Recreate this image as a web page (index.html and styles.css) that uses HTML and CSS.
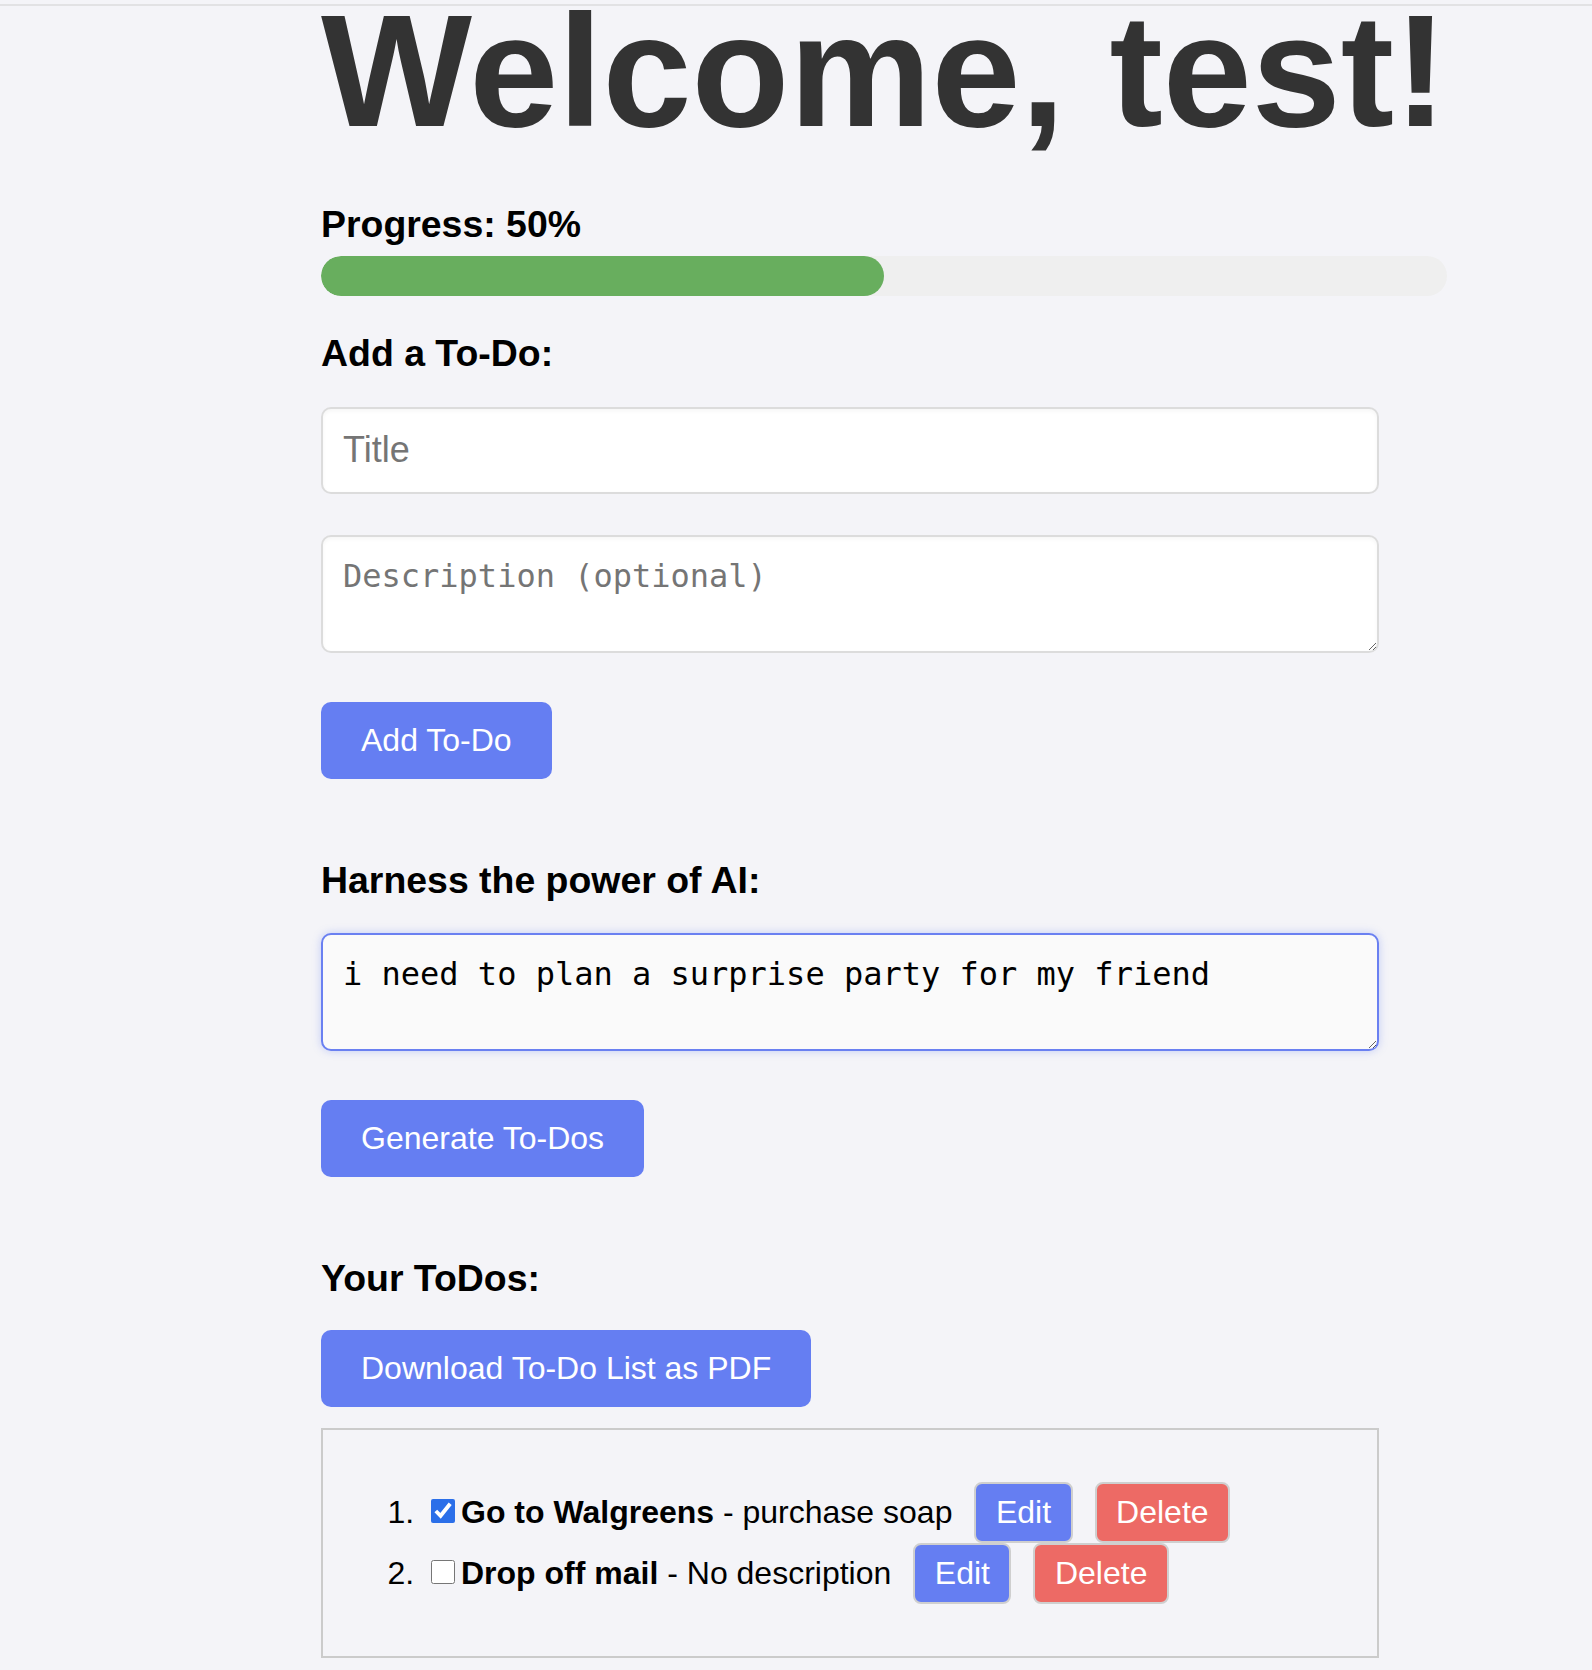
FILE: index.html
```html
<!DOCTYPE html>
<html lang="en">
<head>
<meta charset="utf-8">
<title>To-Do</title>
<link rel="stylesheet" href="styles.css">
</head>
<body>
<div class="topline"></div>
<main class="app">
  <h1 class="welcome">Welcome, test!</h1>

  <h3 class="section-title progress-label">Progress: 50%</h3>
  <div class="progress"><div class="progress-fill" style="width:50%"></div></div>

  <h3 class="section-title add-title">Add a To-Do:</h3>
  <input class="field title-field" type="text" placeholder="Title">
  <textarea class="field area desc-area" placeholder="Description (optional)"></textarea>
  <button class="btn add-btn">Add To-Do</button>

  <h3 class="section-title ai-title">Harness the power of AI:</h3>
  <textarea class="field area ai-area is-focused">i need to plan a surprise party for my friend</textarea>
  <button class="btn gen-btn">Generate To-Dos</button>

  <h3 class="section-title list-title">Your ToDos:</h3>
  <button class="btn pdf-btn">Download To-Do List as PDF</button>

  <div class="todo-box">
    <ol class="todo-list">
      <li class="todo-item"><input class="todo-check" type="checkbox" checked><strong>Go to Walgreens</strong> - purchase soap<button class="small-btn edit">Edit</button><button class="small-btn delete">Delete</button></li>
      <li class="todo-item"><input class="todo-check" type="checkbox"><strong>Drop off mail</strong> - No description<button class="small-btn edit">Edit</button><button class="small-btn delete">Delete</button></li>
    </ol>
  </div>
</main>
</body>
</html>
```

FILE: styles.css
```css
html, body {
  margin: 0;
  padding: 0;
}

body {
  background: #f4f4f8;
  font-family: "Liberation Sans", Arial, Helvetica, sans-serif;
  color: #000;
}

.topline {
  height: 4px;
  border-bottom: 2px solid #e2e2e4;
}

.app {
  margin-left: 321px;
  width: 1160px;
  padding-bottom: 20px;
}

.welcome {
  margin: 5px 0 0;
  font-size: 160px;
  line-height: 120px;
  font-weight: 700;
  color: #333333;
  white-space: nowrap;
}

.section-title {
  margin: 0;
  font-size: 37.44px;
  line-height: 43px;
  font-weight: 700;
  color: #000;
}

.progress-label { margin-top: 72px; }
.add-title { margin-top: 36px; }
.ai-title { margin-top: 79.5px; }
.list-title { margin-top: 79.5px; }

.progress {
  margin-top: 10px;
  height: 40px;
  width: 1126px;
  background: #efefef;
  border-radius: 20px;
  overflow: hidden;
}

.progress-fill {
  height: 100%;
  background: #68ae5e;
  border-radius: 20px;
}

.field {
  display: block;
  box-sizing: border-box;
  width: 1058px;
  padding: 20px;
  border: 2px solid #dcdcdc;
  border-radius: 10px;
  background: #ffffff;
  box-shadow: inset 0 2px 4px rgba(0, 0, 0, 0.04);
  color: #000;
  outline: none;
  margin: 0;
}

.field::placeholder {
  color: #757575;
}

.title-field {
  margin-top: 31.5px;
  height: 87px;
  font-family: "Liberation Sans", Arial, Helvetica, sans-serif;
  font-size: 36px;
  line-height: 43px;
}

.area {
  height: 118px;
  font-family: "DejaVu Sans Mono", Menlo, monospace;
  font-size: 32px;
  line-height: normal;
  resize: vertical;
}

.desc-area { margin-top: 41.5px; }

.ai-area { margin-top: 31.5px; }

.is-focused {
  border-color: #6a80f1;
  background: #fafafa;
  box-shadow: 0 0 8px rgba(101, 126, 242, 0.35);
}

.btn {
  display: block;
  font-family: "Liberation Sans", Arial, Helvetica, sans-serif;
  font-size: 32px;
  line-height: normal;
  padding: 20px 40px;
  border: 0;
  border-radius: 10px;
  background: #657ef2;
  color: #ffffff;
  cursor: pointer;
}

.add-btn { margin-top: 49px; }
.gen-btn { margin-top: 49px; }
.pdf-btn { margin-top: 30.5px; }

.todo-box {
  margin-top: 21px;
  box-sizing: border-box;
  width: 1058px;
  border: 2px solid #cbcbcb;
  padding: 20px;
}

.todo-list {
  margin: 32px 0;
  padding-left: 80px;
  font-size: 32px;
  line-height: normal;
}

.todo-check {
  width: 24px;
  height: 24px;
  margin: 0 6px 3px 8px;
  vertical-align: baseline;
  accent-color: #2b6fe9;
}

.todo-item strong {
  font-weight: 700;
}

.small-btn {
  display: inline-block;
  margin-left: 22px;
  font-family: "Liberation Sans", Arial, Helvetica, sans-serif;
  font-size: 32px;
  line-height: normal;
  padding: 10px 19.5px;
  border: 2px solid #cfcfcf;
  border-radius: 8px;
  color: #ffffff;
  vertical-align: baseline;
  cursor: pointer;
}

.small-btn.edit { background: #657ef2; }
.small-btn.delete { background: #ed6a65; }
```
